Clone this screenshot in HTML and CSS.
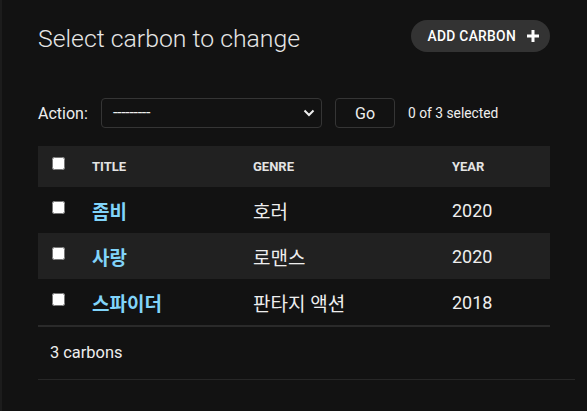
FILE: index.html
```html
<!DOCTYPE html>
<html lang="ko">
<head>
<meta charset="utf-8">
<link rel="stylesheet" href="styles.css">
</head>
<body>
<div class="main">
  <div class="content">
    <div class="top">
      <h1 class="title">Select carbon to change</h1>
      <a class="add-btn" href="#">ADD CARBON
        <svg class="plus" width="12" height="12" viewBox="0 0 12 12"><path d="M4.5 0h3v4.5H12v3H7.5V12h-3V7.5H0v-3h4.5z" fill="#fff"/></svg>
      </a>
    </div>
    <div class="actions">
      <label class="action-label">Action:</label>
      <div class="select">
        <span>---------</span>
        <svg width="12" height="8" viewBox="0 0 12 8"><path d="M1.5 1.5l4.5 4.5 4.5-4.5" fill="none" stroke="#eee" stroke-width="2"/></svg>
      </div>
      <button class="go">Go</button>
      <span class="counter">0 of 3 selected</span>
    </div>
    <table class="results">
      <colgroup><col class="c1"><col class="c2"><col class="c3"><col class="c4"></colgroup>
      <thead>
        <tr><th class="cb"><input type="checkbox"></th><th>TITLE</th><th>GENRE</th><th>YEAR</th></tr>
      </thead>
      <tbody>
        <tr><td class="cb"><input type="checkbox"></td><td><a class="link ko" href="#">좀비</a></td><td class="ko">호러</td><td>2020</td></tr>
        <tr class="alt"><td class="cb"><input type="checkbox"></td><td><a class="link ko" href="#">사랑</a></td><td class="ko">로맨스</td><td>2020</td></tr>
        <tr class="last"><td class="cb"><input type="checkbox"></td><td><a class="link ko" href="#">스파이더</a></td><td class="ko">판타지 액션</td><td>2018</td></tr>
      </tbody>
    </table>
    <p class="paginator">3 carbons</p>
  </div>
</div>
</body>
</html>
```
FILE: styles.css
```css
html, body {
  margin: 0;
  padding: 0;
  background: #121212;
  height: 100%;
}
body {
  font-family: Roboto, "Noto Sans CJK KR", sans-serif;
  color: #eeeeee;
}
.main {
  border-left: 2px solid #1c1c1c;
  min-height: 100%;
  box-sizing: border-box;
}
.content {
  padding: 20px 12px 0 36px;
}
.top {
  display: flex;
  align-items: center;
  justify-content: space-between;
  width: 512px;
  height: 32px;
}
.title {
  margin: 0;
  font-size: 24.8px;
  font-weight: 300;
  color: #e6e6e6;
  position: relative;
  top: 2px;
}
.add-btn {
  display: flex;
  align-items: center;
  gap: 11px;
  height: 32px;
  padding: 0 11px 0 17px;
  box-sizing: border-box;
  border-radius: 16px;
  background: #333333;
  color: #ffffff;
  text-decoration: none;
  font-size: 13.8px;
  font-weight: 500;
  letter-spacing: 0.3px;
}
.actions {
  display: flex;
  align-items: center;
  margin-top: 46px;
  height: 30px;
}
.action-label {
  font-size: 16px;
  color: #eeeeee;
  width: 63px;
}
.select {
  width: 221px;
  height: 30px;
  box-sizing: border-box;
  border: 1px solid #353535;
  border-radius: 4px;
  display: flex;
  align-items: center;
  justify-content: space-between;
  padding: 0 6px 0 11px;
  font-size: 16px;
  background: #121212;
}
.select span {
  position: relative;
  top: -1px;
  letter-spacing: -0.3px;
}
.go {
  margin-left: 13px;
  width: 60px;
  height: 30px;
  box-sizing: border-box;
  border: 1px solid #353535;
  border-radius: 4px;
  background: #121212;
  color: #eeeeee;
  font-family: Roboto, sans-serif;
  font-size: 16px;
  padding: 0;
}
.counter {
  margin-left: 13px;
  font-size: 13.8px;
  color: #eeeeee;
}
.results {
  margin-top: 18px;
  width: 512px;
  table-layout: fixed;
  border-collapse: collapse;
}
.c1 { width: 42px; }
.c2 { width: 161px; }
.c3 { width: 199px; }
.c4 { width: 110px; }
.results th {
  background: #212121;
  height: 41px;
  text-align: left;
  font-size: 13px;
  font-weight: 700;
  color: #e4e4e4;
  padding: 0 0 0 12px;
}
.results td {
  height: 46px;
  padding: 0 0 0 12px;
  font-size: 18px;
  color: #eeeeee;
}
.results td.ko, .results .ko {
  font-size: 19px;
}
.results .cb {
  padding-left: 14px;
}
.results input {
  margin: 0;
  width: 13px;
  height: 13px;
  display: block;
  position: relative;
  top: -3px;
}
.results tr.alt td {
  background: #212121;
}
.results tr.last td {
  border-bottom: 2px solid #2a2a2a;
}
.link {
  color: #81d4fa;
  font-weight: 700;
  text-decoration: none;
}
.paginator {
  margin: 0;
  height: 52px;
  line-height: 52px;
  padding-left: 12px;
  font-size: 16.4px;
  color: #eeeeee;
  border-bottom: 1px solid #272727;
}
```
